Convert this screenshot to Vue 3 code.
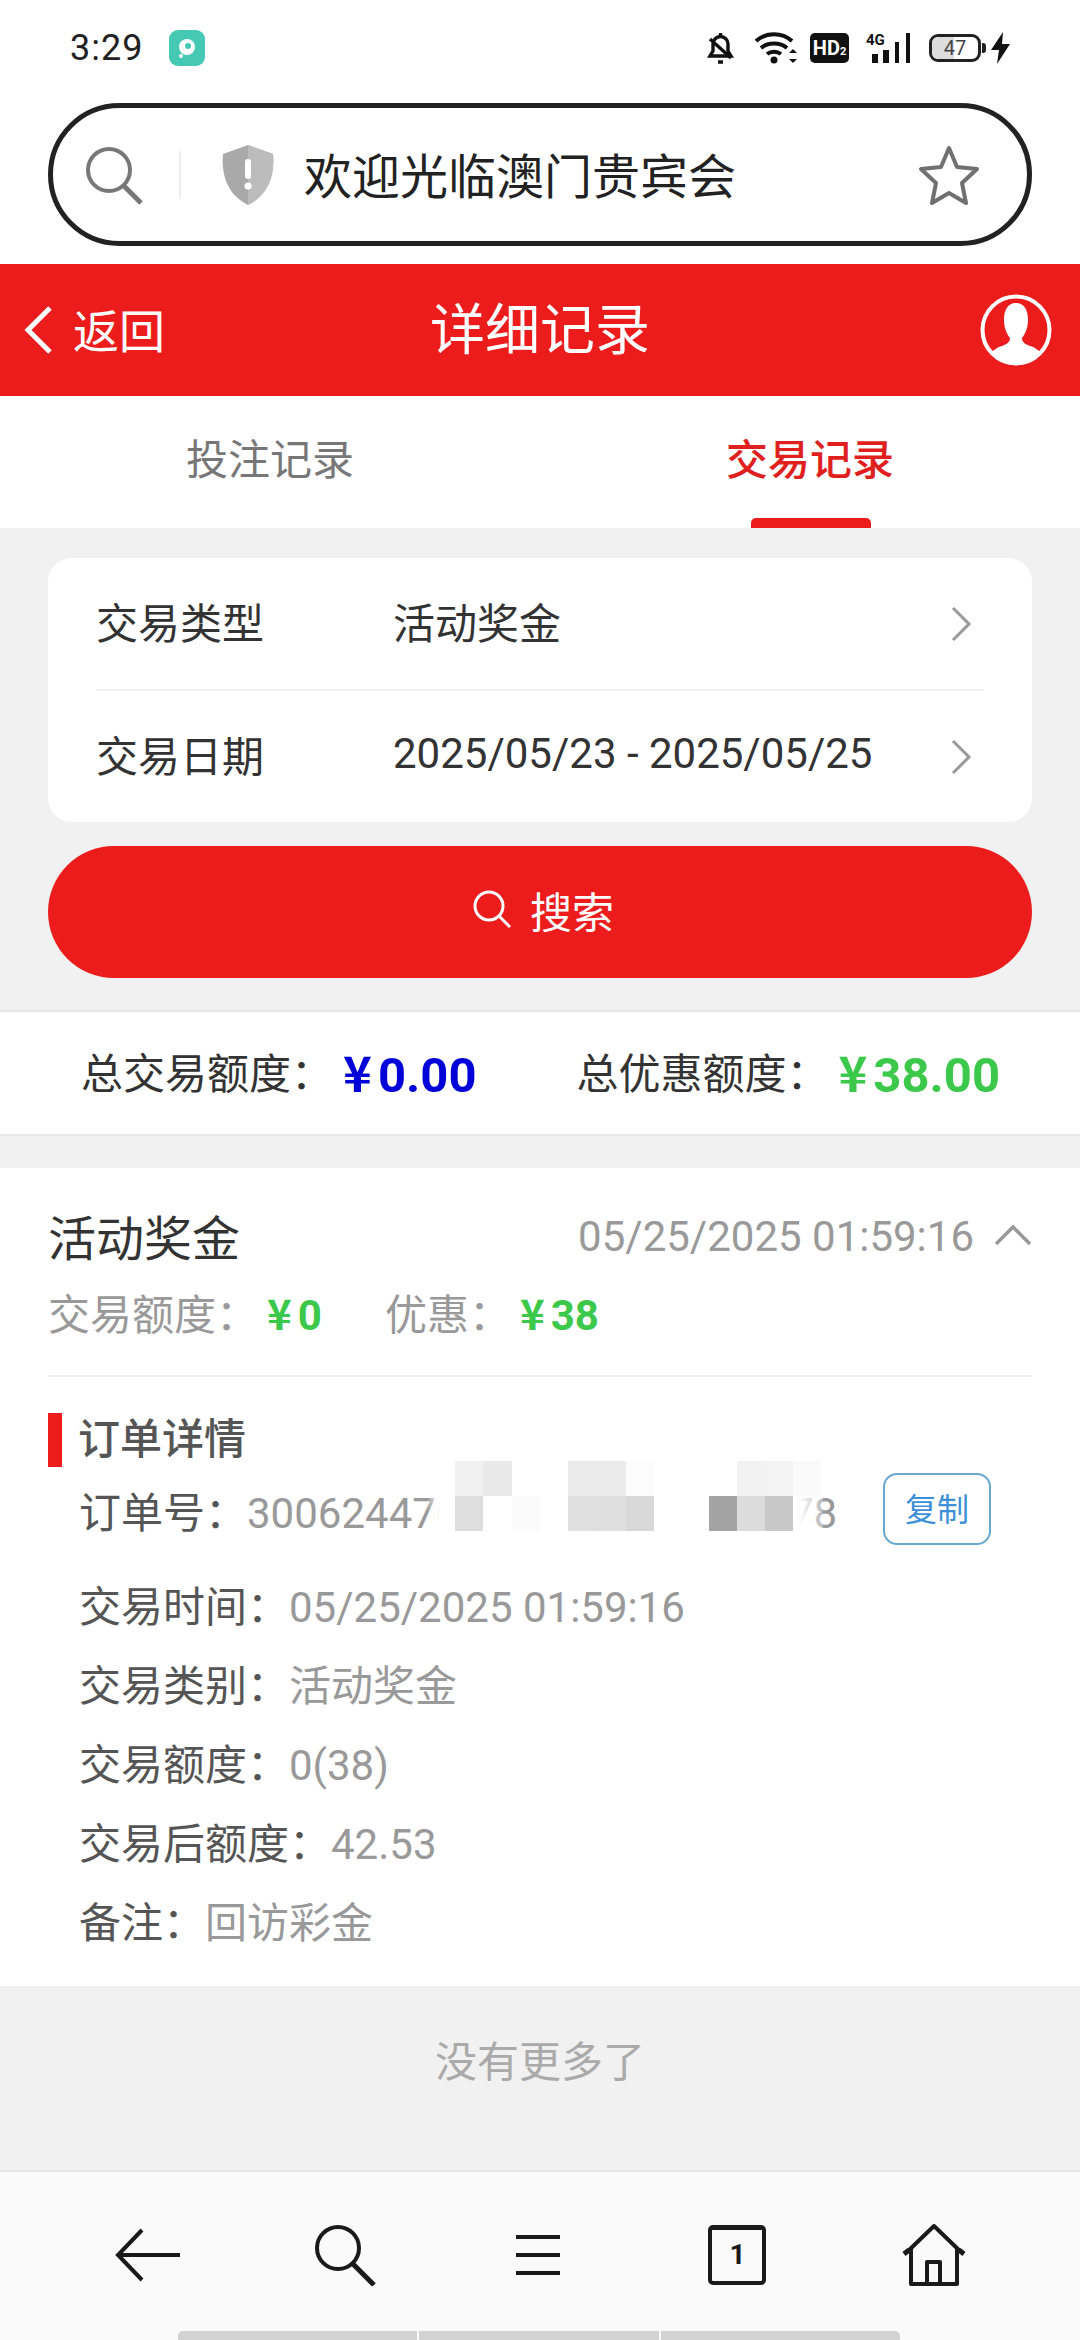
<script setup>
const details = [
  { label: '交易时间：', value: '05/25/2025 01:59:16' },
  { label: '交易类别：', value: '活动奖金' },
  { label: '交易额度：', value: '0(38)' },
  { label: '交易后额度：', value: '42.53' },
  { label: '备注：', value: '回访彩金' }
]
const mosaic = [
  { x: 0, y: 0, w: 28, c: '#f1f1f1' }, { x: 28, y: 0, w: 29, c: '#e9e9e9' },
  { x: 0, y: 35, w: 28, c: '#dedede' }, { x: 57, y: 35, w: 28, c: '#fbfbfb' },
  { x: 113, y: 0, w: 58, c: '#ebebeb' }, { x: 171, y: 0, w: 28, c: '#fcfcfc' },
  { x: 113, y: 35, w: 29, c: '#e0e0e0' }, { x: 142, y: 35, w: 29, c: '#dfdfdf' }, { x: 171, y: 35, w: 28, c: '#d8d8d8' },
  { x: 282, y: 0, w: 28, c: '#f2f2f2' }, { x: 310, y: 0, w: 28, c: '#f3f3f3' }, { x: 338, y: 0, w: 28, c: '#fafafa' },
  { x: 254, y: 35, w: 28, c: '#a3a3a3' }, { x: 282, y: 35, w: 28, c: '#dcdcdc' }, { x: 310, y: 35, w: 28, c: '#c8c8c8' }
]
</script>

<template>
  <div class="page">
    <div class="status">
      <div class="status-left">
        <span class="time">3:29</span>
        <svg class="app-dot" width="36" height="36" viewBox="0 0 36 36">
          <rect width="36" height="36" rx="9" fill="#45c9b4" />
          <circle cx="18" cy="17" r="8" fill="#fff" />
          <circle cx="19" cy="16" r="3" fill="#45c9b4" />
          <circle cx="12" cy="26" r="2" fill="#fff" />
        </svg>
      </div>
      <div class="status-right">
        <svg width="27" height="32" viewBox="0 0 27 32" fill="none" stroke="#111" stroke-width="3.4">
          <path d="M3 24h21l-3-5v-7a7.500 7.500 0 0 0-15 0v7z" />
          <path d="M13.500 1v4M11 30h5M3 7l21 19" />
        </svg>
        <svg class="gap-wifi" width="43" height="32" viewBox="0 0 43 32" fill="none" stroke="#111" stroke-width="4">
          <path d="M1 9c10-9 26-9 36 0M6 16c7-6 19-6 26 0M12 22c4-3 10-3 14 0" />
          <circle cx="19" cy="28" r="3.500" fill="#111" stroke="none" />
          <path d="M38 17l4 4h-8zM38 31l4-4h-8z" fill="#111" stroke="none" />
        </svg>
        <span class="hd">HD<small>2</small></span>
        <svg class="gap-sig" width="45" height="32" viewBox="0 0 45 32">
          <text x="0" y="13" font-size="15" font-weight="700" font-family="Roboto, sans-serif" fill="#111">4G</text>
          <rect x="6" y="22" width="6" height="9" fill="#111" />
          <rect x="17" y="18" width="6" height="13" fill="#111" />
          <rect x="29" y="10" width="4" height="21" fill="#111" />
          <rect x="40" y="1" width="4" height="30" fill="#111" />
        </svg>
        <div class="battery"><span class="bat-fill"></span><span class="bat-num">47</span></div>
        <svg width="19" height="32" viewBox="0 0 19 32"><path d="M12 0L0 18h8l-2 14L19 12h-8z" fill="#111" /></svg>
      </div>
    </div>

    <div class="addr-wrap">
      <div class="addr">
        <svg width="60" height="60" viewBox="0 0 60 60" fill="none" stroke="#777" stroke-width="4">
          <circle cx="25" cy="25" r="21" />
          <path d="M40 41l17 17" stroke-width="5" />
        </svg>
        <i class="addr-sep"></i>
        <svg width="54" height="60" viewBox="0 0 54 60">
          <path d="M27 0l25 9c2 22-5 41-25 51C7 50 0 31 2 9z" fill="#a9a9a9" />
          <path d="M27 0l25 9c2 22-5 41-25 51z" fill="#bcbcbc" />
          <rect x="24" y="14" width="6" height="20" rx="3" fill="#fff" />
          <circle cx="27" cy="41" r="3.600" fill="#fff" />
        </svg>
        <span class="addr-text">欢迎光临澳门贵宾会</span>
        <svg width="62" height="60" viewBox="0 0 62 60" fill="none" stroke="#707070" stroke-width="4" stroke-linejoin="round">
          <path d="M31 3l8 19 20 2-15 14 4 20-17-10-17 10 4-20L3 24l20-2z" />
        </svg>
      </div>
    </div>

    <header class="head">
      <div class="back">
        <svg width="30" height="50" viewBox="0 0 30 50" fill="none" stroke="#fff" stroke-width="5">
          <path d="M27 3L5 25l22 22" />
        </svg>
        <span class="back-text">返回</span>
      </div>
      <h1 class="title">详细记录</h1>
      <svg class="avatar" width="72" height="72" viewBox="0 0 72 72">
        <circle cx="36" cy="36" r="33.500" fill="#ed1c1c" stroke="#fff" stroke-width="4" />
        <path d="M36 9c9 0 12 8 12 17 0 8-3 14-6 18 0 4 3 6 8 8 7 2 10 6 11 8a34 34 0 0 1-50 0c1-2 4-6 11-8 5-2 8-4 8-8-3-4-6-10-6-18 0-9 3-17 12-17z" fill="#fff" />
      </svg>
    </header>

    <nav class="tabs">
      <div class="tab">投注记录</div>
      <div class="tab active">交易记录</div>
    </nav>

    <main class="main">
      <section class="filter">
        <div class="f-row">
          <span class="f-label">交易类型</span>
          <span class="f-value">活动奖金</span>
          <svg class="chev" width="22" height="36" viewBox="0 0 22 36" fill="none" stroke="#999" stroke-width="3"><path d="M3 2l16 16L3 34" /></svg>
        </div>
        <div class="f-row">
          <span class="f-label">交易日期</span>
          <span class="f-value">2025/05/23 - 2025/05/25</span>
          <svg class="chev" width="22" height="36" viewBox="0 0 22 36" fill="none" stroke="#999" stroke-width="3"><path d="M3 2l16 16L3 34" /></svg>
        </div>
      </section>

      <button class="search-btn">
        <svg width="40" height="40" viewBox="0 0 40 40" fill="none" stroke="#fff" stroke-width="3">
          <circle cx="17" cy="17" r="14" />
          <path d="M27 27l11 11" />
        </svg>
        <span>搜索</span>
      </button>

      <section class="summary">
        <div class="sum-item"><span>总交易额度：</span><b class="blue"><em>¥</em>0.00</b></div>
        <div class="sum-item"><span>总优惠额度：</span><b class="green"><em>¥</em>38.00</b></div>
      </section>

      <section class="record">
        <div class="rec-top">
          <span class="rec-title">活动奖金</span>
          <span class="rec-time">05/25/2025 01:59:16</span>
          <svg class="rec-up" width="38" height="22" viewBox="0 0 38 22" fill="none" stroke="#999" stroke-width="3.400"><path d="M2 20L19 3l17 17" /></svg>
        </div>
        <div class="rec-sub">
          <span>交易额度：</span><b class="green sm"><em>¥</em>0</b>
          <span class="sub-gap">优惠：</span><b class="green sm"><em>¥</em>38</b>
        </div>
        <div class="rec-line"></div>
        <h2 class="sec-title">订单详情</h2>
        <div class="order-row">
          <div class="order-text">
            <span class="d-label">订单号：</span><span class="d-value">3006244700000000000000078</span>
            <div class="mosaic">
              <i v-for="(m, i) in mosaic" :key="i" :style="{ left: m.x + 'px', top: m.y + 'px', width: m.w + 'px', background: m.c }"></i>
            </div>
          </div>
          <button class="copy">复制</button>
        </div>
        <div v-for="d in details" :key="d.label" class="d-row">
          <span class="d-label">{{ d.label }}</span><span class="d-value">{{ d.value }}</span>
        </div>
      </section>

      <div class="no-more">没有更多了</div>
    </main>

    <footer class="bar">
      <div class="bar-item">
        <svg width="66" height="54" viewBox="0 0 66 54" fill="none" stroke="#1a1a1a" stroke-width="4"><path d="M27 2L3 27l24 25M3 27h62" /></svg>
      </div>
      <div class="bar-item">
        <svg width="62" height="62" viewBox="0 0 62 62" fill="none" stroke="#1a1a1a" stroke-width="4"><circle cx="24" cy="24" r="21" /><path d="M39 40l21 21" stroke-width="5" /></svg>
      </div>
      <div class="bar-item">
        <svg class="menu-ic" width="44" height="40" viewBox="0 0 44 40" fill="#1a1a1a"><rect y="0" width="44" height="4" /><rect y="18" width="44" height="4" /><rect y="36" width="44" height="4" /></svg>
      </div>
      <div class="bar-item">
        <div class="tab-count">1</div>
      </div>
      <div class="bar-item">
        <svg width="64" height="62" viewBox="0 0 64 62" fill="none" stroke="#1a1a1a" stroke-width="4" stroke-linejoin="round">
          <path d="M5 28L32 2l27 26" />
          <path d="M2 30l5-4M62 30l-5-4" stroke-width="5" />
          <path d="M9 24v36h46V24" />
          <path d="M25 60V38h13v22" />
        </svg>
      </div>
      <div class="scroll-strip"><i></i><i></i><i></i></div>
    </footer>
  </div>
</template>

<style>
html, body { margin: 0; background: #fff; }
</style>

<style scoped>
.page {
  width: 1080px;
  height: 2340px;
  overflow: hidden;
  display: flex;
  flex-direction: column;
  background: #f1f1f1;
  font-family: Roboto, "Noto Sans CJK SC", sans-serif;
  color: #333;
}
.status {
  height: 96px;
  flex: none;
  background: #fff;
  display: flex;
  justify-content: space-between;
  align-items: flex-start;
  padding: 30px 70px 0 70px;
  box-sizing: border-box;
}
.status-left { display: flex; align-items: center; gap: 26px; height: 36px; }
.time { font-size: 36px; color: #222; line-height: 36px; letter-spacing: 1px; }
.status-right { display: flex; align-items: center; height: 32px; margin-top: 2px; }
.gap-wifi { margin-left: 21px; }
.hd {
  margin-left: 12px;
  width: 39px; height: 30px;
  background: #111; color: #fff;
  border-radius: 5px;
  font-size: 20px; font-weight: 700; line-height: 30px;
  text-align: center;
}
.hd small { font-size: 11px; }
.gap-sig { margin-left: 17px; }
.battery {
  position: relative;
  margin-left: 18px;
  margin-right: 10px;
  width: 52px; height: 28px;
  border: 3px solid #222;
  border-radius: 9px;
  box-sizing: border-box;
  text-align: center;
}
.battery::after {
  content: "";
  position: absolute;
  right: -8px; top: 6px;
  width: 4px; height: 10px;
  background: #222;
  border-radius: 0 3px 3px 0;
}
.bat-fill { position: absolute; left: 0; top: 0; bottom: 0; width: 47%; background: #ddd; border-radius: 6px 0 0 6px; }
.bat-num { position: relative; font-size: 20px; line-height: 22px; color: #444; display: block; }
.addr-wrap {
  height: 168px;
  flex: none;
  background: #fff;
  padding: 7px 48px 0;
  box-sizing: border-box;
}
.addr {
  height: 143px;
  box-sizing: border-box;
  border: 5px solid #222;
  border-radius: 72px;
  display: flex;
  align-items: center;
  padding: 0 47px 0 31px;
}
.addr-sep { width: 2px; height: 48px; background: #eee; margin: 0 40px 0 35px; flex: none; }
.addr-text { flex: 1; margin-left: 29px; padding-bottom: 3px; font-size: 48px; color: #222; white-space: nowrap; }
.head {
  height: 132px;
  flex: none;
  background: #ed1c1c;
  position: relative;
  display: flex;
  align-items: center;
  justify-content: space-between;
  padding: 0 28px 0 23px;
  box-sizing: border-box;
  color: #fff;
}
.back { display: flex; align-items: center; gap: 20px; font-size: 46px; }
.back-text { padding-bottom: 5px; }
.title {
  position: absolute;
  left: 0; right: 0;
  margin: 0 0 10px;
  text-align: center;
  font-size: 55px;
  font-weight: 400;
  pointer-events: none;
}
.tabs { height: 132px; flex: none; background: #fff; display: flex; }
.tab {
  flex: 1;
  text-align: center;
  font-size: 42px;
  line-height: 130px;
  color: #777;
  position: relative;
}
.tab.active { color: #e01f1f; font-weight: 500; }
.tab.active::after {
  content: "";
  position: absolute;
  left: 50%; bottom: 0;
  width: 120px; height: 10px;
  margin-left: -59px;
  background: #ed1c1c;
  border-radius: 5px 5px 0 0;
}
.main { flex: 1; display: flex; flex-direction: column; min-height: 0; padding-top: 30px; }
.filter {
  margin: 0 48px;
  height: 264px;
  background: #fff;
  border-radius: 24px;
  padding: 0 48px;
  display: flex;
  flex-direction: column;
}
.f-row { flex: 1; display: flex; align-items: center; font-size: 42px; color: #333; padding-bottom: 6px; }
.f-row + .f-row { border-top: 2px solid #f0f0f0; }
.f-label { width: 297px; flex: none; }
.f-value { flex: 1; white-space: nowrap; }
.chev { margin-right: 12px; margin-top: 6px; flex: none; }
.search-btn {
  margin: 24px 48px 0;
  height: 132px;
  flex: none;
  border: 0;
  border-radius: 66px;
  background: #ed1c1c;
  color: #fff;
  font: inherit;
  font-size: 42px;
  display: flex;
  align-items: center;
  justify-content: center;
  gap: 18px;
  padding: 0 0 6px 6px;
}
.summary {
  margin-top: 32px;
  height: 126px;
  flex: none;
  box-sizing: border-box;
  background: #fff;
  border-top: 2px solid #e8e8e8;
  border-bottom: 2px solid #e8e8e8;
  display: flex;
  align-items: center;
  justify-content: space-between;
  padding: 0 80px 6px 81px;
  font-size: 42px;
}
.sum-item { display: flex; align-items: center; }
.sum-item span { margin-right: 10px; }
.sum-item b { font-size: 49px; font-weight: 700; }
b em { font-style: normal; margin-right: 6px; font-family: "Noto Sans CJK SC", sans-serif; }
.blue { color: #0000d8; }
.green { color: #3cc84a; }
.record {
  margin-top: 32px;
  background: #fff;
  height: 818px;
  flex: none;
  padding: 0 48px;
  box-sizing: border-box;
}
.rec-top { display: flex; align-items: center; height: 70px; padding-top: 32px; }
.rec-title { flex: 1; font-size: 48px; color: #333; }
.rec-time { font-size: 42px; color: #999; padding-top: 3px; }
.rec-up { margin-left: 20px; }
.rec-sub { display: flex; align-items: center; height: 72px; margin-top: 5px; font-size: 42px; color: #999; }
.green.sm { font-size: 42px; margin-left: 9px; }
.sub-gap { margin-left: 63px; }
.rec-line { height: 2px; background: #efefef; margin-top: 28px; }
.sec-title {
  margin: 36px 0 0;
  padding-left: 16px;
  border-left: 14px solid #ed1c1c;
  height: 54px;
  line-height: 54px;
  font-size: 42px;
  font-weight: 500;
  color: #555;
}
.order-row { display: flex; align-items: center; height: 72px; margin-top: 6px; padding-left: 31px; }
.order-text { flex: 1; position: relative; font-size: 42px; white-space: nowrap; }
.mosaic { position: absolute; left: 376px; top: -18px; width: 338px; height: 70px; background: #fff; }
.mosaic::before {
  content: "";
  position: absolute;
  left: -28px; top: 0; bottom: 0;
  width: 28px;
  background: linear-gradient(to right, rgba(255,255,255,0), #fff 45%);
}
.mosaic::after {
  content: "";
  position: absolute;
  left: 338px; top: 0; bottom: 0;
  width: 30px;
  background: linear-gradient(to right, #fff 20%, rgba(255,255,255,0.3));
}
.mosaic i { position: absolute; height: 35px; z-index: 1; }
.copy {
  margin-right: 41px;
  width: 108px; height: 72px;
  flex: none;
  background: #fff;
  border: 2px solid #6aa9cf;
  border-radius: 14px;
  color: #3d8fd8;
  font: inherit;
  font-size: 32px;
  padding: 0 0 4px;
}
.d-row { height: 79px; line-height: 79px; padding-left: 31px; font-size: 42px; white-space: nowrap; }
.order-row + .d-row { margin-top: 23px; }
.d-label { color: #555; }
.d-value { color: #999; }
.no-more { flex: 1; text-align: center; padding-top: 49px; font-size: 42px; color: #aaa; line-height: 56px; }
.bar {
  height: 170px;
  flex: none;
  box-sizing: border-box;
  position: relative;
  background: #fafafa;
  border-top: 2px solid #e6e6e6;
  display: flex;
  align-items: flex-start;
  padding: 52px 48px 0 50px;
}
.bar-item { flex: 1; display: flex; justify-content: center; height: 62px; align-items: center; }
.menu-ic { margin-right: 6px; }
.tab-count {
  width: 58px; height: 60px;
  box-sizing: border-box;
  border: 4px solid #1a1a1a;
  border-top-width: 5px;
  border-radius: 5px;
  font-size: 28px;
  font-weight: 700;
  line-height: 50px;
  text-align: center;
  color: #1a1a1a;
}
.scroll-strip {
  position: absolute;
  left: 178px; bottom: 0;
  width: 722px; height: 9px;
  display: flex;
  gap: 2px;
  overflow: hidden;
  border-radius: 5px 5px 0 0;
}
.scroll-strip i { flex: 1; background: #d2d2d2; }
</style>
